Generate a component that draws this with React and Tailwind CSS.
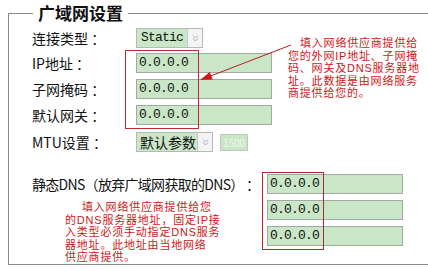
import React from "react";

const cjk = { fontFamily: '"Noto Sans CJK SC", "Noto Sans", sans-serif' };
const note = { fontFamily: '"Liberation Sans", "Noto Sans CJK SC", sans-serif' };
const mono = { fontFamily: '"Liberation Mono", "Noto Sans CJK SC", monospace' };

function DropBtn() {
  return (
    <div className="flex h-full w-[15px] items-center justify-center border-l border-[#c8c8c8] bg-[#f4f4f4]">
      <svg width="7" height="8" viewBox="0 0 7 8" fill="none" stroke="#a8a8a8" strokeWidth="1">
        <path d="M1 1.5 L3.5 4 L6 1.5" />
        <path d="M1 4.5 L3.5 7 L6 4.5" />
      </svg>
    </div>
  );
}

function Field({ value }) {
  return (
    <div
      className="flex h-[20px] w-[136px] items-center border border-[#a2a8a2] bg-[#c9e7c6] pl-[2px] text-[13px] tracking-[-0.8px] text-[#111]"
      style={mono}
    >
      {value}
    </div>
  );
}

function Row({ label, children, className = "" }) {
  return (
    <div className={`flex h-[20px] items-center ${className}`}>
      <div className="w-[104px] whitespace-nowrap text-[14px] leading-[20px] text-[#111]" style={cjk}>
        {label}
      </div>
      {children}
    </div>
  );
}

export default function App() {
  return (
    <div className="relative h-[271px] w-[428px] overflow-hidden bg-white">
      <div className="pt-[13px] pl-[8px]">
        <div className="relative h-[252px] w-[440px] border border-[#8a8a8a]">
          <div
            className="absolute left-[24px] top-[-12px] bg-white px-[5px] text-[17px] font-bold leading-[22px] text-[#111]"
            style={cjk}
          >
            广域网设置
          </div>
          <div className="flex flex-col pl-[23px] pt-[14px]">
            <Row label="连接类型 ：">
              <div className="flex h-[20px] w-[67px] border border-[#b4bab4] bg-[#c9e7c6]">
                <div className="flex flex-1 items-center pl-[4px] text-[13px] tracking-[-0.8px] text-[#111]" style={mono}>
                  Static
                </div>
                <DropBtn />
              </div>
            </Row>
            <Row label="IP地址 ：" className="mt-[5px]">
              <Field value="0.0.0.0" />
            </Row>
            <Row label="子网掩码 ：" className="mt-[6px]">
              <Field value="0.0.0.0" />
            </Row>
            <Row label="默认网关 ：" className="mt-[6px]">
              <Field value="0.0.0.0" />
            </Row>
            <Row label="MTU设置 ：" className="mt-[7px]">
              <div className="flex h-[20px] w-[77px] border border-[#b4bab4] bg-[#c9e7c6]">
                <div className="flex flex-1 items-center pl-[3px] text-[14px] text-[#111]" style={cjk}>
                  默认参数
                </div>
                <DropBtn />
              </div>
              <div
                className="ml-[7px] flex h-[17px] w-[28px] items-center justify-center border border-[#b8ccb8] bg-[#c9e7c6] text-[10px] text-[#eef6ee]"
                style={cjk}
              >
                1500
              </div>
            </Row>
            <div className="mt-[22px] flex">
              <div className="w-[235px]">
                <div
                  className="h-[20px] whitespace-nowrap text-[14px] leading-[20px] tracking-[-0.7px] text-[#111]"
                  style={cjk}
                >
                  静态DNS（放弃广域网获取的DNS） ：
                </div>
                <div
                  className="ml-[33px] mt-[7px] whitespace-nowrap text-[11px] leading-[12.5px] tracking-[0.8px] text-[#d01616]"
                  style={note}
                >
                  <div className="pl-[17px]">填入网络供应商提供给您</div>
                  <div>的DNS服务器地址，固定IP接</div>
                  <div>入类型必须手动指定DNS服务</div>
                  <div>器地址。此地址由当地网络</div>
                  <div>供应商提供。</div>
                </div>
              </div>
              <div className="flex flex-col gap-[6px]">
                <Field value="0.0.0.0" />
                <Field value="0.0.0.0" />
                <Field value="0.0.0.0" />
              </div>
            </div>
          </div>
        </div>
      </div>

      {/* annotation overlays */}
      <div
        className="absolute left-[288px] top-[37px] whitespace-nowrap text-[11px] leading-[12.5px] tracking-[0.8px] text-[#d01616]"
        style={note}
      >
        <div className="pl-[12px]">填入网络供应商提供给</div>
        <div>您的外网IP地址、子网掩</div>
        <div>码、网关及DNS服务器地</div>
        <div>址。此数据是由网络服务</div>
        <div>商提供给您的。</div>
      </div>
      <div className="absolute left-[125px] top-[50px] h-[79px] w-[74px] border border-[#c0282d]" />
      <div className="absolute left-[262px] top-[172px] h-[78px] w-[62px] border border-[#b0282d]" />
      <svg className="absolute left-0 top-0" width="428" height="271" viewBox="0 0 428 271">
        <line x1="291" y1="45" x2="208" y2="77" stroke="#b02020" strokeWidth="1" />
        <polygon points="200,80 212.6,79.4 209.8,72" fill="#d01818" />
      </svg>
    </div>
  );
}
